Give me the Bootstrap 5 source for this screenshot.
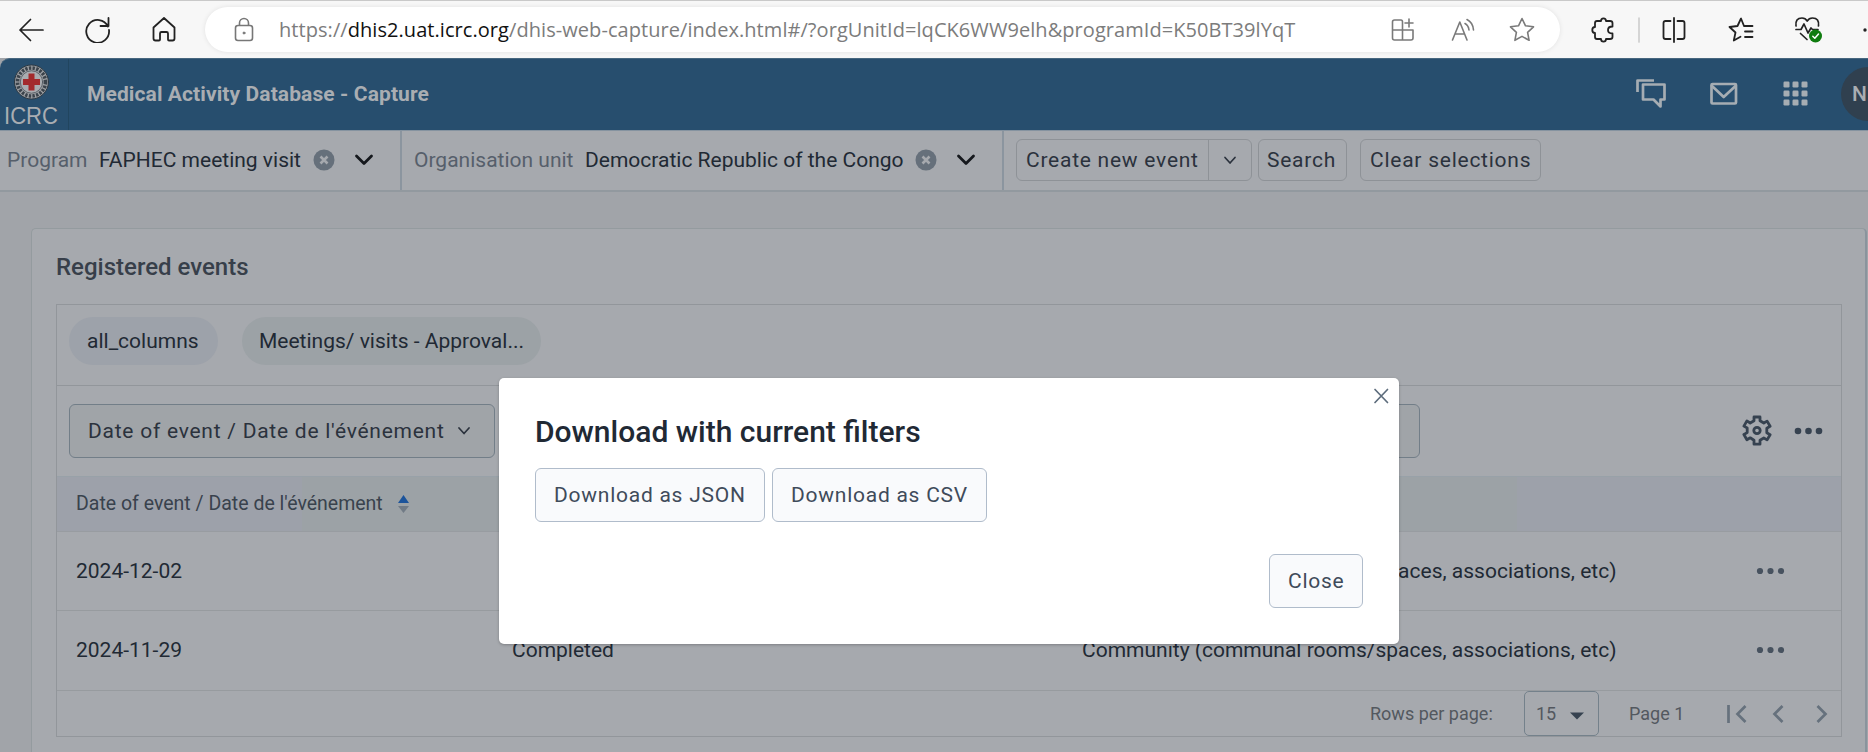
<!DOCTYPE html>
<html lang="en">
<head>
<meta charset="utf-8">
<title>Medical Activity Database - Capture</title>
<link href="https://cdn.jsdelivr.net/npm/bootstrap@5.3.0/dist/css/bootstrap.min.css" rel="stylesheet">
<style>
body{font-family:Roboto,"Liberation Sans",sans-serif;font-size:21px;line-height:24px;color:#212934;background:#a1a4a9;width:1868px;height:752px;overflow:hidden;position:relative}
svg{display:block;flex:none;fill:none;stroke-linecap:round;stroke-linejoin:round}
.t{white-space:nowrap;flex:none}
.chrome-bar{height:58px;background:#f7f7f7;border-top:1px solid #c9c9c9;color:#222}
.address{width:1355px;height:45px;margin-left:28px;border-radius:23px;background:#fff;box-shadow:0 0 5px rgba(0,0,0,.09);color:#7c7c7c}
.url{font-family:"Open Sans","Noto Sans",sans-serif;font-size:20px;letter-spacing:.06px;width:1081px;margin-left:25px}
.url b{font-weight:400;color:#111}
.app-head{height:72px;background:#274e6e;color:#a9adb2;border-top-left-radius:10px;border-top:1px solid #47677f;padding-bottom:1px}
.logo-cell{width:69px;height:71px;border-right:1px solid #21455f}
.selector{height:62px;background:#a6a9ae;border-top:1px solid #8593a0;border-bottom:2px solid #92999f}
.cell-sel{border-right:2px solid #8b959f;height:59px;padding-bottom:2px}
.lbl{color:#565f6b}
.obtn{height:42px;border:1px solid #8e9297;border-radius:6px;color:#2b323d;display:flex;align-items:center;margin-bottom:1px;letter-spacing:.75px}
.panel{margin:36px 1px 0 31px;height:560px;background:#a6a9ae;border:1px solid #949b9f;border-right:2px solid #8a949d;border-radius:5px;padding:0 24px 0 24px}
.panel h2{font-size:24px;font-weight:500;line-height:26px;margin:25px 0 24px 0;color:#373f4a}
.grid-box{width:1786px;border:1px solid #92969b;height:433px}
.chip{height:48px;border-radius:24px;background:#9da2aa;display:flex;align-items:center;padding-left:18px}
.filter{height:54px;border:1px solid #727e88;border-radius:6px;background:#a0a4a8;color:#2b323d;display:flex;align-items:center}
.head-row{height:56px;background:linear-gradient(90deg,#9da1aa 0 245px,#9ca2a6 245px 1460px,#9da1aa 1460px);border-top:1px solid #98a1a8;border-bottom:1px solid #989ca1;color:#39424d}
.data-row{border-bottom:1px solid #979b9f}
.dl-modal{position:absolute;left:499px;top:378px;width:900px;height:266px;background:#fff;border-radius:5px;box-shadow:0 1px 3px rgba(0,0,0,.25);padding:0 36px}
.dl-modal h1{font-size:30px;line-height:36px;font-weight:500;color:#212934;margin:36px 0 18px}
.mbtn{height:54px;border:1.5px solid #b0bccb;border-radius:6px;background:#f9fafc;color:#404b5a;display:flex;align-items:center;padding-left:18px;letter-spacing:.75px}
.close-x{position:absolute;right:10px;top:10px}
.foot{color:#53585f;font-size:18px;height:45px}
.sel-num{width:75px;height:45px;border:1.5px solid #74818b;border-radius:5px}
.avatar{width:54px;height:54px;border-radius:50%;background:#30404f;font-weight:500}
</style>
</head>
<body>
<div class="chrome-bar d-flex align-items-center overflow-hidden">
  <svg width="26" height="26" style="margin-left:18px" stroke="#222" stroke-width="1.7"><path d="M25 13H2M12.500 2.500 2 13l10.500 10.500"/></svg>
  <svg width="27" height="27" style="margin-left:40px" stroke="#222" stroke-width="1.8"><path d="M24 10.500A11.400 11.400 0 1 0 25 14M24.500 2v8h-8"/></svg>
  <svg width="26" height="27" style="margin-left:40px" stroke="#222" stroke-width="1.8"><path d="M2.500 11.500 13 2l10.500 9.500v11q0 2-2 2H18q-1 0-1-1v-6q0-1.500-1.500-1.500h-5Q9 16 9 17.500v6q0 1-1 1H4.500q-2 0-2-2z"/></svg>
  <div class="address d-flex align-items-center flex-shrink-0">
    <svg width="20" height="26" style="margin-left:29px" stroke="#777" stroke-width="1.6"><rect x="1.500" y="8.500" width="17" height="15" rx="2.500"/><path d="M5.500 8V6a4.500 4.500 0 0 1 9 0v2"/><circle cx="10" cy="16" r="1" fill="#777" stroke-width="1"/></svg>
    <div class="url t">https://<b>dhis2.uat.icrc.org</b>/dhis-web-capture/index.html#/?orgUnitId=lqCK6WW9elh&amp;programId=K50BT39lYqT</div>
    <svg width="24" height="24" style="margin-left:31px" stroke="#7a7a7a" stroke-width="1.6"><path d="M1.500 12H22v8q0 2-2 2H3.500q-2 0-2-2V4q0-2 2-2H10q1.500 0 1.500 2v18M18 1v8M14 5h8"/></svg>
    <svg width="26" height="24" style="margin-left:36px" stroke="#7a7a7a" stroke-width="1.6"><path d="M1.500 22 8.800 4 16 22M4 16h9.500M14 5.500q3.500 2 4 6.500M16 1.500q6 3 6.500 10.500"/></svg>
    <svg width="26" height="26" style="margin-left:32px" stroke="#7a7a7a" stroke-width="1.6"><path d="m13 1.500 3.500 7.300 8 1-5.900 5.500 1.500 8-7.100-3.900-7.100 3.900 1.500-8L1.500 9.800l8-1z"/></svg>
  </div>
  <svg width="24" height="26" style="margin-left:31px" stroke="#222" stroke-width="1.8"><path d="M6 4h4q0-2.700 2.500-2.700T15 4h4q2.500 0 2.500 2v3.500q-4.500 0-4.500 3.500t4.500 3.500V20q0 2-2.500 2h-4q0 2.700-2.500 2.700T10 22H6q-2 0-2-2v-4q-2.700 0-2.700-3T4 10V6q0-2 2-2z"/></svg>
  <svg width="2" height="26" style="margin-left:23px"><path d="M1 1v24" stroke="#cfcfcf" stroke-width="1.700"/></svg>
  <svg width="24" height="26" style="margin-left:22px" stroke="#222" stroke-width="1.8"><path d="M8.500 4H3.500q-2 0-2 2v14q0 2 2 2h5M12 1v24M15.500 4h5q2 0 2 2v14q0 2-2 2h-5"/></svg>
  <svg width="26" height="26" style="margin-left:42px" stroke="#222" stroke-width="1.800"><path d="M16 9 13 1.500 9.500 9l-8 1 6 5.500-1.700 8 6.700-3.700M16 9h8.500M17 14.500h7.500M17 20h7.500"/></svg>
  <svg width="29" height="29" style="margin-left:40px" stroke="#222" stroke-width="1.7"><path d="M2 11Q1 3 8 3q3.500 0 5.200 3Q15 3 18.500 3q7 0 6 8M2 14.500h5l3-5.500 4 9 3-5 1.500 1.500H24M6.500 18.500l6.500 6"/><circle cx="21.500" cy="21" r="6.500" fill="#107c10" stroke="none"/><path d="m18.800 21.200 2 2 3.700-4.200" stroke="#fff" stroke-width="1.500"/></svg>
  <svg width="6" height="6" style="margin-left:39px"><circle cx="3" cy="3" r="1.700" fill="#222"/></svg>
</div>

<header class="app-head d-flex align-items-center overflow-hidden">
  <div class="logo-cell flex-shrink-0">
    <svg width="68" height="70"><circle cx="31.500" cy="23" r="17" fill="#9da0a4" stroke="#2b3741"/><circle cx="31.500" cy="23" r="14" stroke="#3b434b" stroke-width="3.600" stroke-dasharray="2.400 1.300" stroke-linecap="butt"/><circle cx="31.500" cy="23" r="11.200" fill="#a9acb0" stroke="#4b535b" stroke-width=".8"/><path d="M31.500 14.500v17M23 23h17" stroke="#a32a2c" stroke-width="6" stroke-linecap="butt"/><text x="4" y="65" textLength="54" lengthAdjust="spacingAndGlyphs" font-family="Liberation Sans,sans-serif" font-size="23.500" fill="#a9adb2">ICRC</text></svg>
  </div>
  <div class="t" style="font-weight:700;margin-left:18px;width:1549px;letter-spacing:.1px">Medical Activity Database - Capture</div>
  <svg width="32" height="32" stroke="#a6adb3" stroke-width="2.700"><path d="M7 6.500h21.500V21.500H24.500v7l-7-7H7z"/><path d="M1.500 14V2.500H18" stroke-linecap="butt"/></svg>
  <svg width="30" height="24" style="margin-left:41px" stroke="#a6adb3" stroke-width="2.700"><rect x="2.500" y="2" width="24.500" height="19.500" rx="1"/><path d="m3 4 11.700 11L26.500 4"/></svg>
  <svg width="26" height="26" style="margin-left:44px"><g fill="#a6adb3"><rect width="6" height="6" rx="1.200" x=".5" y=".5"/><rect width="6" height="6" rx="1.200" x="9.500" y=".5"/><rect width="6" height="6" rx="1.200" x="18.500" y=".5"/><rect width="6" height="6" rx="1.200" x=".5" y="9.500"/><rect width="6" height="6" rx="1.200" x="9.500" y="9.500"/><rect width="6" height="6" rx="1.200" x="18.500" y="9.500"/><rect width="6" height="6" rx="1.200" x=".5" y="18.500"/><rect width="6" height="6" rx="1.200" x="9.500" y="18.500"/><rect width="6" height="6" rx="1.200" x="18.500" y="18.500"/></g></svg>
  <div class="avatar flex-shrink-0 d-flex align-items-center" style="margin-left:32px;padding-left:11px">N</div>
</header>

<div class="selector d-flex align-items-center">
  <div class="cell-sel d-flex align-items-center flex-shrink-0" style="width:402px">
    <span class="t lbl" style="margin-left:7px;width:92px">Program</span>
    <span class="t" style="width:214px">FAPHEC meeting visit</span>
    <svg width="22" height="22"><circle cx="11" cy="11" r="10.500" fill="#66707b"/><path d="m7.500 7.500 7 7m0-7-7 7" stroke="#a6a9ae" stroke-width="2.600" stroke-linecap="butt"/></svg>
    <svg width="20" height="12" style="margin-left:19px" stroke="#15181d" stroke-width="2.800"><path d="m2.500 2 7.500 7.500L17.500 2"/></svg>
  </div>
  <div class="cell-sel d-flex align-items-center flex-shrink-0" style="width:602px">
    <span class="t lbl" style="margin-left:12px;width:171px">Organisation unit</span>
    <span class="t" style="width:330px">Democratic Republic of the Congo</span>
    <svg width="22" height="22"><circle cx="11" cy="11" r="10.500" fill="#66707b"/><path d="m7.500 7.500 7 7m0-7-7 7" stroke="#a6a9ae" stroke-width="2.600" stroke-linecap="butt"/></svg>
    <svg width="20" height="12" style="margin-left:19px" stroke="#15181d" stroke-width="2.800"><path d="m2.500 2 7.500 7.500L17.500 2"/></svg>
  </div>
  <div class="obtn flex-shrink-0" style="width:236px;margin-left:12px">
    <span class="t d-flex align-items-center" style="width:192px;height:40px;padding-left:9px;border-right:1px solid #8e9297">Create new event</span>
    <svg width="14" height="9" style="margin-left:14px" stroke="#2b323d" stroke-width="1.700"><path d="m2 1.500 5 5.500 5-5.500"/></svg>
  </div>
  <div class="obtn t" style="width:89px;margin-left:6px;padding-left:8px">Search</div>
  <div class="obtn t" style="width:181px;margin-left:13px;padding-left:9px">Clear selections</div>
</div>

<main class="panel">
  <h2 class="t">Registered events</h2>
  <div class="grid-box">
    <div class="d-flex" style="height:81px;padding:12px 0 0 12px;border-bottom:1px solid #92969b">
      <div class="chip t" style="width:149px">all_columns</div>
      <div class="chip t" style="width:299px;margin-left:24px;padding-left:17px;background:#9ca2a6">Meetings/ visits - Approval...</div>
    </div>
    <div class="d-flex align-items-center" style="height:90px;padding-left:12px">
      <div class="filter" style="width:426px;padding-left:18px"><span class="t" style="width:369px;letter-spacing:.75px">Date of event / Date de l'événement</span><svg width="14" height="9" stroke="#2b323d" stroke-width="1.700"><path d="m2 1 5 5.500L12 1"/></svg></div>
      <div class="filter" style="width:918px;margin-left:7px"></div>
      <svg width="30" height="32" style="margin-left:322px" stroke="#364250" stroke-width="2.800"><path d="M12 5.800V2h6v3.800l3.800 2.200 3.300-1.900 3 5.200-3.300 1.900v4.600l3.300 1.900-3 5.200-3.300-1.900-3.800 2.200v4h-6v-4L8.200 22.800l-3.300 1.900-3-5.200 3.300-1.900V13l-3.300-1.900 3-5.200L8.200 8z"/><circle cx="15" cy="15.500" r="3.200"/></svg>
      <svg width="30" height="8" style="margin-left:22px"><g fill="#364250"><circle cx="4" cy="4" r="3.300"/><circle cx="14.500" cy="4" r="3.300"/><circle cx="25" cy="4" r="3.300"/></g></svg>
    </div>
    <div class="head-row d-flex align-items-center" style="padding-left:19px">
      <span class="t" style="width:320px;font-size:19.5px">Date of event / Date de l'événement</span>
      <svg width="13" height="20" style="margin-left:1px"><path d="M6.500 1 12 9H1z" fill="#1c549b"/><path d="M1 12h11l-5.500 7z" fill="#717b86"/></svg>
    </div>
    <div class="data-row d-flex align-items-center" style="height:79px;padding-left:19px">
      <span class="t" style="width:436px">2024-12-02</span><span class="t" style="width:570px">Completed</span><span class="t" style="width:674px">Community (communal rooms/spaces, associations, etc)</span>
      <svg width="30" height="8"><g fill="#47525f"><circle cx="4" cy="4" r="3.100"/><circle cx="14.500" cy="4" r="3.100"/><circle cx="25" cy="4" r="3.100"/></g></svg>
    </div>
    <div class="data-row d-flex align-items-center" style="height:80px;padding:0 0 2px 19px">
      <span class="t" style="width:436px">2024-11-29</span><span class="t" style="width:570px">Completed</span><span class="t" style="width:674px">Community (communal rooms/spaces, associations, etc)</span>
      <svg width="30" height="8"><g fill="#47525f"><circle cx="4" cy="4" r="3.100"/><circle cx="14.500" cy="4" r="3.100"/><circle cx="25" cy="4" r="3.100"/></g></svg>
    </div>
    <div class="foot d-flex align-items-center" style="padding-left:1313px">
      <span class="t" style="width:154px">Rows per page:</span>
      <div class="sel-num d-flex align-items-center flex-shrink-0"><span class="t" style="margin-left:11px;width:34px">15</span><svg width="14" height="8" class="mt-1"><path d="M0 .5h14L7 7.500z" fill="#364250"/></svg></div>
      <span class="t" style="margin-left:30px;width:98px">Page 1</span>
      <svg width="20" height="20" stroke="#66717d" stroke-width="2.700"><g stroke-linecap="butt" stroke-linejoin="miter"><path d="M1.500 1v18M18.500 2l-8 8 8 8"/></g></svg>
      <svg width="12" height="20" style="margin-left:25px" stroke="#66717d" stroke-width="2.700"><path d="m10.500 2-8 8 8 8" stroke-linecap="butt" stroke-linejoin="miter"/></svg>
      <svg width="12" height="20" style="margin-left:32px" stroke="#66717d" stroke-width="2.700"><path d="m1.500 2 8 8-8 8" stroke-linecap="butt" stroke-linejoin="miter"/></svg>
    </div>
  </div>
</main>

<section class="dl-modal" role="dialog">
  <svg class="close-x" width="16" height="16" stroke="#5d6c7c" stroke-width="1.700"><path d="m2 1.500 12.500 13m0-13-12.500 13"/></svg>
  <h1 class="t">Download with current filters</h1>
  <div class="d-flex" style="gap:7px">
    <div class="mbtn t" style="width:230px">Download as JSON</div>
    <div class="mbtn t" style="width:215px">Download as CSV</div>
  </div>
  <div class="d-flex justify-content-end" style="margin-top:32px">
    <div class="mbtn t" style="width:94px">Close</div>
  </div>
</section>
<script src="https://cdn.jsdelivr.net/npm/bootstrap@5.3.0/dist/js/bootstrap.bundle.min.js"></script>
</body>
</html>
